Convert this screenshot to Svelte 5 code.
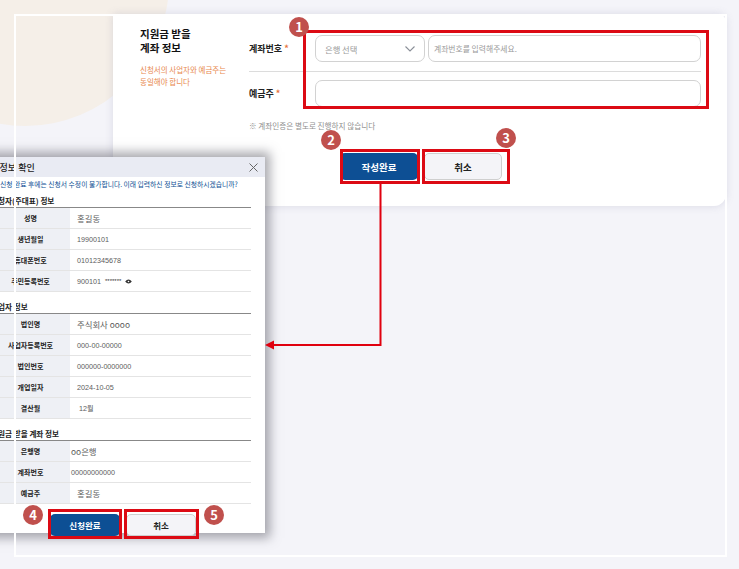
<script lang="ts">
  const sections = [
    {
      title: "신청자(주대표) 정보",
      rows: [
        { label: "성명", value: "홍길동", big: true },
        { label: "생년월일", value: "19900101" },
        { label: "휴대폰번호", value: "01012345678" },
        { label: "주민등록번호", value: "900101", masked: true },
      ],
    },
    {
      title: "사업자 정보",
      rows: [
        { label: "법인명", value: "주식회사 oooo", big: true },
        { label: "사업자등록번호", value: "000-00-00000" },
        { label: "법인번호", value: "000000-0000000" },
        { label: "개업일자", value: "2024-10-05" },
        { label: "결산월", value: "12월", indent: true },
      ],
    },
    {
      title: "지원금 받을 계좌 정보",
      rows: [
        { label: "은행명", value: "oo은행", big: true, tight: true },
        { label: "계좌번호", value: "00000000000", tight: true },
        { label: "예금주", value: "홍길동", big: true },
      ],
    },
  ];
</script>

<div class="page">
  <div class="blob"></div>

  <section class="card">
    <div class="intro">
      <h2>지원금 받을<br />계좌 정보</h2>
      <p>신청서의 사업자와 예금주는<br />동일해야 합니다</p>
    </div>
    <div class="form">
      <div class="row first">
        <span class="label">계좌번호<i>*</i></span>
        <div class="select">
          <span>은행 선택</span>
          <svg width="10" height="6" viewBox="0 0 10 6"><path d="M.5.5L5 5 9.5.5" fill="none" stroke="#8a8f98" stroke-width="1.1" /></svg>
        </div>
        <div class="input grow">계좌번호를 입력해주세요.</div>
      </div>
      <div class="row">
        <span class="label">예금주<i>*</i></span>
        <div class="input grow"></div>
      </div>
      <p class="note">※ 계좌인증은 별도로 진행하지 않습니다</p>
      <div class="actions">
        <button class="btn primary">작성완료</button>
        <button class="btn plain">취소</button>
      </div>
    </div>
  </section>

  <div class="modal">
    <header>
      <span>신청 정보 확인</span>
      <svg width="9" height="9" viewBox="0 0 9 9"><path d="M.5.5l8 8M8.5.5l-8 8" stroke="#666" stroke-width="1" /></svg>
    </header>
    <div class="modal-body">
      <p class="warn">신청 완료 후에는 신청서 수정이 불가합니다. 이래 입력하신 정보로 신청하시겠습니까?</p>
      {#each sections as section}
        <h3>{section.title}</h3>
        <div class="table">
          {#each section.rows as row}
            <div class="tr">
              <div class="th">{row.label}</div>
              <div class="td" class:big={row.big} class:indent={row.indent} class:tight={row.tight}>
                {row.value}
                {#if row.masked}
                  <span class="mask">*******</span>
                  <svg width="7" height="5" viewBox="0 0 8 6"><path d="M0 3q4-5 8 0q-4 5-8 0z" fill="#333" /><circle cx="4" cy="3" r="1" fill="#fff" /></svg>
                {/if}
              </div>
            </div>
          {/each}
        </div>
      {/each}
      <div class="modal-actions">
        <button class="btn primary small">신청완료</button>
        <button class="btn plain small">취소</button>
      </div>
    </div>
  </div>

  <!-- 화면 테두리 -->
  <div class="frame"></div>

  <!-- 주석 표시 -->
  <div class="box" style="left:303px;top:30px;width:406px;height:79px"></div>
  <div class="box" style="left:340px;top:149px;width:80px;height:35px"></div>
  <div class="box" style="left:422px;top:149px;width:88px;height:35px"></div>
  <div class="box" style="left:48px;top:509px;width:74px;height:30px"></div>
  <div class="box" style="left:124px;top:509px;width:75px;height:30px"></div>

  <span class="badge" style="left:289px;top:17px">1</span>
  <span class="badge" style="left:321px;top:130px">2</span>
  <span class="badge" style="left:496px;top:128px">3</span>
  <span class="badge" style="left:23px;top:505px">4</span>
  <span class="badge" style="left:204px;top:505px">5</span>

  <svg class="arrow" width="739" height="569" viewBox="0 0 739 569">
    <path d="M380.5 184V345H272" fill="none" stroke="#e0000f" stroke-width="2" />
    <path d="M265 345l9-4.5v9z" fill="#e0000f" />
  </svg>
</div>

<style>
  :global(body) {
    margin: 0;
  }
  .page {
    position: relative;
    width: 739px;
    height: 569px;
    overflow: hidden;
    background: #f4f4f9;
    font-family: "Noto Sans CJK KR", "Noto Sans", sans-serif;
    color: #222;
  }
  .blob {
    position: absolute;
    left: -119px;
    top: -162px;
    width: 288px;
    height: 288px;
    border-radius: 50%;
    background: #f5efe8;
  }
  .card {
    position: relative;
    box-sizing: border-box;
    display: flex;
    width: 613px;
    height: 192px;
    margin: 14px 0 0 113px;
    padding: 12px 25px 0 27px;
    background: #fff;
    border-radius: 0 8px 12px 8px;
    box-shadow: 0 0 8px rgba(110, 110, 150, 0.2);
  }
  .intro {
    width: 109px;
    flex: none;
  }
  .intro h2 {
    margin: 1px 0 0;
    font-size: 10.5px;
    line-height: 14px;
    font-weight: 700;
    color: #111;
  }
  .intro p {
    margin: 9px 0 0;
    font-size: 7.5px;
    line-height: 12px;
    color: #e8894f;
    white-space: nowrap;
  }
  .form {
    flex: 1;
  }
  .row {
    display: flex;
    align-items: center;
    height: 27px;
    padding-top: 8px;
  }
  .row.first {
    padding: 9px 0;
    border-bottom: 1px solid #dcdcdc;
  }
  .label {
    width: 66px;
    flex: none;
    font-size: 9px;
    font-weight: 700;
    color: #222;
  }
  .label i {
    margin-left: 2px;
    color: #e8743b;
    font-style: normal;
  }
  .select,
  .input {
    box-sizing: border-box;
    height: 27px;
    display: flex;
    align-items: center;
    border: 1px solid #d2d2d2;
    border-radius: 7px;
    background: #fff;
    font-size: 7.8px;
    color: #9a9a9a;
  }
  .select {
    width: 110px;
    flex: none;
    justify-content: space-between;
    padding: 0 9px;
    margin-right: 3px;
    font-size: 8.3px;
  }
  .input {
    padding-left: 5px;
  }
  .grow {
    flex: 1;
  }
  .note {
    margin: 12px 0 0;
    font-size: 7.6px;
    line-height: 13px;
    color: #8f8f8f;
  }
  .actions {
    display: flex;
    gap: 6px;
    margin: 21px 0 0 91px;
  }
  .btn {
    box-sizing: border-box;
    width: 78px;
    height: 27px;
    padding: 0;
    border-radius: 5px;
    font-family: inherit;
    font-size: 9.5px;
    font-weight: 700;
  }
  .primary {
    background: #0d4f94;
    border: none;
    color: #fff;
  }
  .plain {
    background: #f4f4f8;
    border: 1px solid #cfcfcf;
    color: #222;
  }
  .modal {
    position: absolute;
    left: -22px;
    top: 157px;
    width: 287px;
    height: 376px;
    background: #fff;
    box-shadow: 0 0 10px 5px rgba(85, 85, 95, 0.5);
  }
  .modal header {
    display: flex;
    align-items: center;
    justify-content: space-between;
    height: 20px;
    padding: 0 7px 0 3px;
    background: #e9ebf3;
    font-size: 9px;
    font-weight: 500;
  }
  .modal-body {
    padding: 0 14px 0 13px;
  }
  .warn {
    margin: 0 0 0 9px;
    height: 20px;
    font-size: 6.8px;
    line-height: 14px;
    color: #0d4f94;
    white-space: nowrap;
  }
  h3 {
    margin: 0;
    height: 10px;
    font-size: 7.6px;
    line-height: 8px;
    font-weight: 700;
    color: #222;
  }
  .table {
    border-top: 1px solid #888;
    margin-bottom: 11px;
  }
  .tr {
    display: flex;
    height: 20px;
    border-bottom: 1px solid #e4e4e4;
  }
  .th {
    width: 79px;
    display: flex;
    align-items: center;
    justify-content: center;
    background: #eef0f5;
    font-size: 7px;
    font-weight: 700;
  }
  .td {
    display: flex;
    align-items: center;
    gap: 4px;
    padding-left: 7px;
    font-family: "Liberation Sans", "Noto Sans CJK KR", sans-serif;
    font-size: 7.2px;
    color: #5c5c5c;
  }
  .td.big {
    font-family: "Noto Sans CJK KR", sans-serif;
    font-size: 8.4px;
  }
  .td.indent {
    padding-left: 9px;
  }
  .td.tight {
    padding-left: 1px;
  }
  .mask {
    font-size: 6px;
    color: #333;
  }
  .modal-actions {
    display: flex;
    gap: 6px;
    margin: -1px 0 0 59px;
  }
  .small {
    width: 70px;
    height: 22px;
    font-size: 8.5px;
  }
  .frame {
    position: absolute;
    left: 14px;
    top: 14px;
    width: 709px;
    height: 539px;
    border: 2px solid #fff;
    pointer-events: none;
  }
  .box {
    position: absolute;
    box-sizing: border-box;
    border: 3px solid #dc0a14;
  }
  .badge {
    position: absolute;
    width: 20px;
    height: 20px;
    border-radius: 50%;
    background: #c0504d;
    color: #fff;
    font-size: 13px;
    font-weight: 700;
    line-height: 20px;
    text-align: center;
  }
  .arrow {
    position: absolute;
    left: 0;
    top: 0;
    pointer-events: none;
  }
</style>
